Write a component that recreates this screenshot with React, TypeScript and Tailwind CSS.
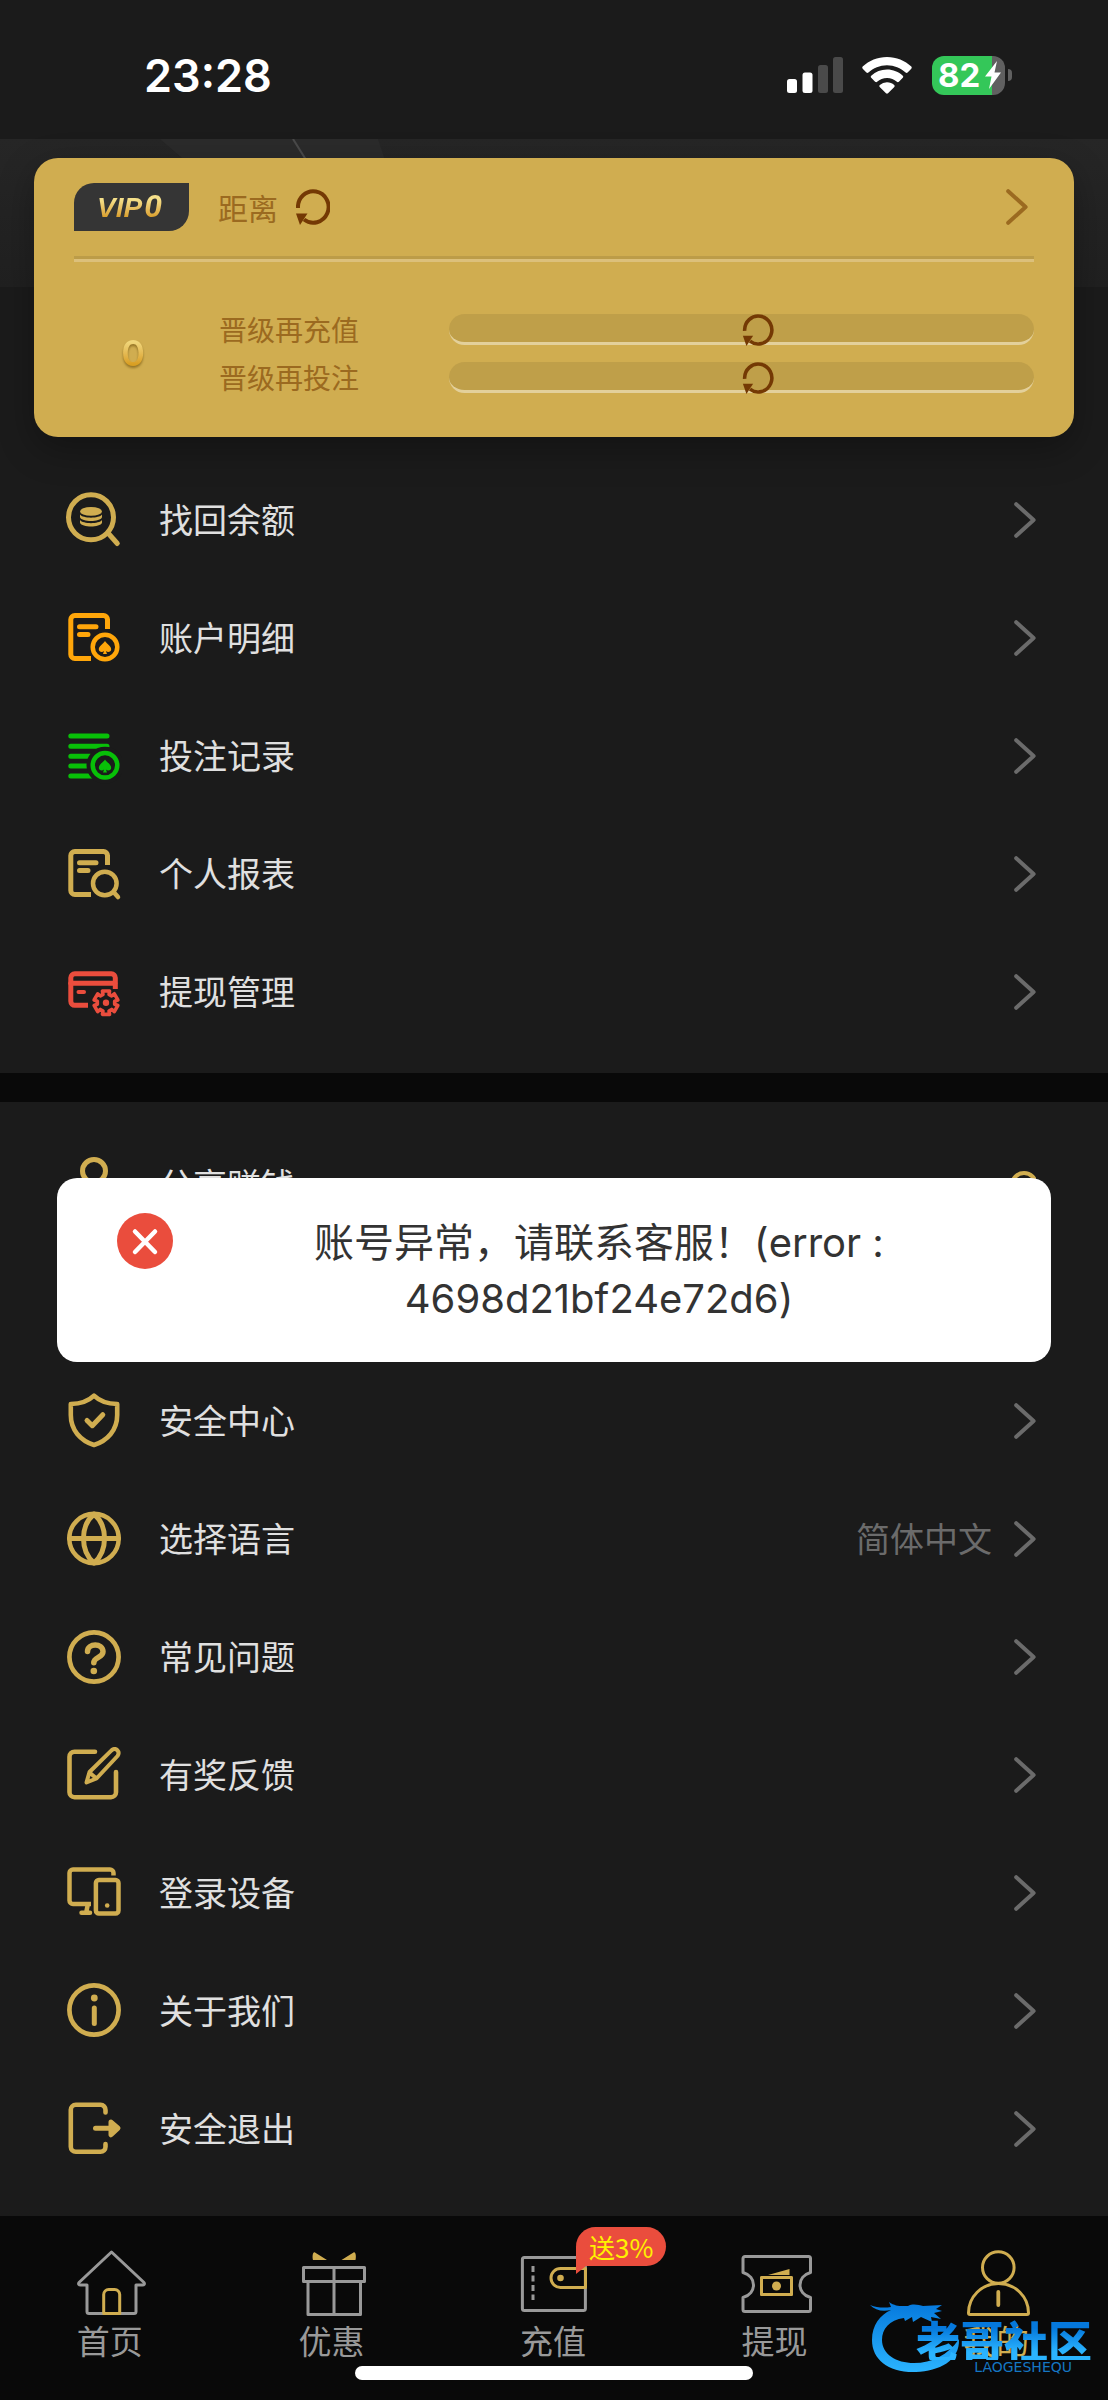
import React from "react";
import type { ReactNode } from "react";

const GOLD = "#d0ad50";

type IconProps = { color?: string; children: ReactNode };

function MenuIcon({ color = GOLD, children }: IconProps) {
  return (
    <svg
      viewBox="0 0 56 56"
      className="size-14 shrink-0"
      fill="none"
      stroke={color}
      strokeWidth="5"
      strokeLinecap="round"
      strokeLinejoin="round"
      aria-hidden="true"
    >
      {children}
    </svg>
  );
}

function Spade({ x, y, color }: { x: number; y: number; color: string }) {
  return (
    <path
      transform={`translate(${x} ${y})`}
      d="M0-6.6C1.6-4 6.2-1.6 6.2 1.7 6.2 4.6 2.6 5.4.9 3.4L2 6.6H-2L-.9 3.4C-2.6 5.4-6.2 4.6-6.2 1.7-6.2-1.6-1.6-4 0-6.6Z"
      fill={color}
      stroke="none"
    />
  );
}

function gearPath(cx: number, cy: number) {
  const points: string[] = [];
  for (let tooth = 0; tooth < 6; tooth++) {
    const base = -90 + tooth * 60;
    const steps: [number, number][] = [
      [-20, 8.8],
      [-17, 12.2],
      [17, 12.2],
      [20, 8.8],
    ];
    for (const [offset, radius] of steps) {
      const a = ((base + offset) * Math.PI) / 180;
      points.push(`${(cx + radius * Math.cos(a)).toFixed(2)} ${(cy + radius * Math.sin(a)).toFixed(2)}`);
    }
  }
  return `M${points.join("L")}Z`;
}

const DocOutline = () => (
  <>
    <path d="M41.500 19V9.500a4 4 0 0 0-4-4H8.800a4 4 0 0 0-4 4v35a4 4 0 0 0 4 4H25" strokeLinecap="butt" />
    <path d="M13.500 16.700H30M13.500 24.500H22" />
  </>
);

const icons = {
  balance: (
    <MenuIcon>
      <circle cx="25" cy="25.300" r="22.500" />
      <path d="M42 41l9.300 10.500" />
      <g fill={GOLD} stroke="none">
        <ellipse cx="25" cy="19.400" rx="11" ry="4.400" />
        <path d="M14 22.500c3 4.200 19 4.200 22 0v2.800c-2 5-20 5-22 0zM14 28c3 4.200 19 4.200 22 0v2.800c-2 5-20 5-22 0z" />
      </g>
    </MenuIcon>
  ),
  account: (
    <MenuIcon color="#ffa60a">
      <DocOutline />
      <circle cx="39" cy="37" r="12.300" strokeWidth="4.500" />
      <Spade x={39} y={37.500} color="#ffa60a" />
    </MenuIcon>
  ),
  bets: (
    <MenuIcon color="#08c008">
      <path d="M4.800 8H41M4.800 18.200H41M4.800 28.200H24M4.800 38H22M4.800 48H26" />
      <circle cx="39" cy="37.300" r="15.500" stroke="#1b1b1b" strokeWidth="6" fill="#1b1b1b" />
      <circle cx="39" cy="37.300" r="12.300" strokeWidth="4.500" />
      <Spade x={39} y={38} color="#08c008" />
    </MenuIcon>
  ),
  report: (
    <MenuIcon>
      <DocOutline />
      <circle cx="38.800" cy="37.500" r="11.800" strokeWidth="4.500" />
      <path d="M48 46.500l4 4.500" strokeWidth="4.500" />
    </MenuIcon>
  ),
  withdraw: (
    <MenuIcon color="#ea4d3d">
      <path d="M22 41.300H8.800a4 4 0 0 1-4-4V13.800a4 4 0 0 1 4-4h36.500a4 4 0 0 1 4 4V25" strokeLinecap="butt" />
      <path d="M4.800 19.300h44" />
      <path d="M12.500 28h5.500" strokeWidth="4" />
      <path d={gearPath(40, 38.700)} strokeWidth="3.600" />
      <circle cx="40" cy="38.700" r="3.200" fill="#ea4d3d" stroke="none" />
    </MenuIcon>
  ),
  share: (
    <MenuIcon>
      <circle cx="28" cy="14" r="11.500" />
      <path d="M6 52c1-28 43-28 44 0z" />
    </MenuIcon>
  ),
  card: (
    <MenuIcon>
      <rect x="4" y="10" width="48" height="36" rx="4" />
      <path d="M4 22h48" />
    </MenuIcon>
  ),
  security: (
    <MenuIcon>
      <path d="M28 2.600C23 7.500 15 10.800 4.800 11v11c0 15 9.500 25.500 23.200 30 13.700-4.500 23.200-15 23.200-30V11C41 10.800 33 7.500 28 2.600Z" strokeWidth="4.600" />
      <path d="M21 27.500l5.300 5.200 10.500-11" />
    </MenuIcon>
  ),
  language: (
    <MenuIcon>
      <circle cx="28" cy="27.500" r="24.700" strokeWidth="4.500" />
      <path d="M3.500 27.500h49" />
      <path d="M28 3C14 15 14 40 28 52 42 40 42 15 28 3Z" />
    </MenuIcon>
  ),
  faq: (
    <MenuIcon>
      <circle cx="28" cy="28" r="24.600" strokeWidth="4.700" />
      <path d="M21.500 22.500c0-8.500 15.500-9 15.500.3 0 6-9.200 5.200-9.200 11" strokeWidth="5.500" />
      <circle cx="27.800" cy="42" r="3.300" fill={GOLD} stroke="none" />
    </MenuIcon>
  ),
  feedback: (
    <MenuIcon>
      <path d="M29 4.700H8.500a5 5 0 0 0-5 5v35.500a5 5 0 0 0 5 5h36.500a5 5 0 0 0 5-5V25" strokeWidth="4.600" />
      <path d="M20.500 35.500l3-10.500L45.500 3.300c4.500-3.500 9 1.500 6 5.700L30.500 31.500zM24 26l6 5" strokeWidth="4" />
    </MenuIcon>
  ),
  devices: (
    <MenuIcon>
      <path d="M47.500 10.500V8a3.500 3.500 0 0 0-3.500-3.500H7A3.500 3.500 0 0 0 3.500 8v27.500A3.500 3.500 0 0 0 7 39h18" strokeWidth="4.500" strokeLinecap="butt" />
      <path d="M15.500 47.800H24M21.500 41l-1 5" strokeWidth="4.500" />
      <rect x="29.900" y="15" width="22.600" height="33.500" rx="3" strokeWidth="4.500" />
      <circle cx="41.200" cy="40.500" r="2.300" fill={GOLD} stroke="none" />
    </MenuIcon>
  ),
  about: (
    <MenuIcon>
      <circle cx="28" cy="27" r="24.600" strokeWidth="4.700" />
      <circle cx="28.300" cy="15" r="3.400" fill={GOLD} stroke="none" />
      <path d="M28.300 25v15.500" />
    </MenuIcon>
  ),
  logout: (
    <MenuIcon>
      <path d="M39.500 11.500V9a5 5 0 0 0-5-5.200H9.800a5 5 0 0 0-5 5v37a5 5 0 0 0 5 5h24.700a5 5 0 0 0 5-5V43" strokeWidth="4.600" />
      <path d="M29.500 27.200H44" />
      <path d="M45 21l7 6.200-7 6.600z" fill={GOLD} />
    </MenuIcon>
  ),
};

function Chevron({ color }: { color: string }) {
  return (
    <svg viewBox="0 0 22 36" className="h-9 w-[22px] shrink-0" fill="none" stroke={color} strokeWidth="4" strokeLinecap="round" strokeLinejoin="round" aria-hidden="true">
      <path d="M2.200 2.200 19.600 18 2.200 33.800" />
    </svg>
  );
}

function Refresh({ className }: { className: string }) {
  return (
    <svg viewBox="0 0 34 36" className={className} aria-hidden="true">
      <path d="M2 19A15.300 15.700 0 1 1 8 30.500" fill="none" stroke="#743904" strokeWidth="4" />
      <path d="M0 24.500H11.500L4 36Z" fill="#743904" />
    </svg>
  );
}

type Item = { icon: ReactNode; label: string; value?: string; badge?: boolean };

const accountItems: Item[] = [
  { icon: icons.balance, label: "找回余额" },
  { icon: icons.account, label: "账户明细" },
  { icon: icons.bets, label: "投注记录" },
  { icon: icons.report, label: "个人报表" },
  { icon: icons.withdraw, label: "提现管理" },
];

const serviceItems: Item[] = [
  { icon: icons.share, label: "分享赚钱", badge: true },
  { icon: icons.card, label: "个人资料" },
  { icon: icons.security, label: "安全中心" },
  { icon: icons.language, label: "选择语言", value: "简体中文" },
  { icon: icons.faq, label: "常见问题" },
  { icon: icons.feedback, label: "有奖反馈" },
  { icon: icons.devices, label: "登录设备" },
  { icon: icons.about, label: "关于我们" },
  { icon: icons.logout, label: "安全退出" },
];

function MenuRow({ item }: { item: Item }) {
  return (
    <li>
      <a href="#" className="flex items-center py-[31px] pr-[72px] pl-[66px] text-[34px] leading-[52px] text-[#e0e0e0]">
        {item.icon}
        <span className="ml-[37px] flex-1 pb-[3px]">{item.label}</span>
        {item.value && <span className="mr-[22px] pb-[3px] text-[#6b6b6b]">{item.value}</span>}
        {item.badge ? (
          <svg viewBox="0 0 28 28" className="size-7" fill="none" stroke={GOLD} strokeWidth="4" aria-hidden="true">
            <circle cx="16" cy="14" r="12" />
          </svg>
        ) : (
          <Chevron color="#6b6b6b" />
        )}
      </a>
    </li>
  );
}

function StatusBar() {
  return (
    <header className="flex h-[139px] items-center justify-between pt-[11px] pr-[96px] pl-[144px] text-white">
      <time className="font-[Inter] text-[45px] leading-none font-semibold">23:28</time>
      <div className="flex items-center">
        <svg viewBox="0 0 56 36" className="h-9 w-14" aria-label="signal">
          <rect x="0" y="22" width="10" height="14" rx="2.500" fill="#fff" />
          <rect x="15.500" y="15.500" width="10" height="20.500" rx="2.500" fill="#fff" />
          <rect x="31" y="8" width="10" height="28" rx="2.500" fill="#4a4a4a" />
          <rect x="46" y="0" width="10" height="36" rx="2.500" fill="#4a4a4a" />
        </svg>
        <svg viewBox="0 0 50 37" className="ml-[19px] h-[37px] w-[50px]" fill="#fff" aria-label="wifi">
          <path d="M25 0c9.500 0 18 3.600 24.300 9.600.6.600.6 1.500 0 2.100l-3.700 3.800c-.6.600-1.400.6-2 .1C38.700 11 32.200 8.200 25 8.200S11.300 11 6.400 15.600c-.6.500-1.400.5-2-.1L.7 11.700c-.6-.600-.6-1.500 0-2.100C7 3.600 15.500 0 25 0Z" />
          <path d="M25 12.600c6.100 0 11.600 2.300 15.800 6.100.6.600.6 1.500 0 2.100l-3.900 3.900c-.6.600-1.400.6-2 .1A14.500 14.500 0 0 0 25 21c-3.800 0-7.200 1.400-9.900 3.800-.6.500-1.400.5-2-.1l-3.900-3.900c-.6-.6-.6-1.500 0-2.100a23.500 23.500 0 0 1 15.800-6.100Z" />
          <path d="M25 25.200c2.800 0 5.300 1 7.200 2.700.6.600.6 1.400.1 2L26 36.300c-.6.600-1.400.6-2 0l-6.300-6.400c-.5-.600-.5-1.400.1-2a10.800 10.800 0 0 1 7.200-2.700Z" />
        </svg>
        <div className="relative ml-5 flex h-[39px] w-[73px] items-center overflow-hidden rounded-xl bg-[linear-gradient(90deg,#34c759_82%,#606060_82%)] pl-[6px]">
          <span className="font-[Inter] text-[33px] leading-none font-bold">82</span>
          <svg viewBox="0 0 16 28" className="absolute right-1 h-7 w-4" fill="#fff" aria-hidden="true">
            <path d="M12 0 0 15.500h6.500L4 28 16 11.500H9.500Z" />
          </svg>
        </div>
        <div className="ml-[3px] h-3 w-1 rounded-r-full bg-[#606060]" />
      </div>
    </header>
  );
}

function Progress({ label }: { label: string }) {
  return (
    <div className="flex items-center">
      <span className="w-[230px] shrink-0 text-[28px] leading-8 text-[#9b6a20]">{label}</span>
      <div role="progressbar" aria-label={label} className="flex h-[31px] flex-1 items-end justify-center rounded-full border-b-3 border-[#e3d09b] bg-[#bf9f49] pl-8">
        <Refresh className="-mb-1 h-8 w-8 shrink-0" />
      </div>
    </div>
  );
}

function VipCard() {
  return (
    <section className="relative mx-[34px] -mt-[129px] rounded-3xl bg-[#d0ad50] px-10 pt-[25px] pb-11 shadow-[0_12px_36px_rgba(0,0,0,0.3)]">
      <a href="#" className="flex h-12 items-center">
        <span className="flex h-12 w-[115px] items-center justify-center rounded-tl-[20px] rounded-br-[20px] bg-[#353535]">
          <span className="bg-linear-to-b from-[#f5e08a] from-30% to-[#d79a1e] to-80% bg-clip-text pr-1 font-['Liberation_Sans'] text-[28px] leading-9 font-bold text-transparent italic">
            VIP<span className="pl-[2px] font-[Roboto] text-[32px]">0</span>
          </span>
        </span>
        <span className="ml-[29px] text-[30px] leading-9 text-[#9b6a20]">距离</span>
        <Refresh className="ml-[18px] h-9 w-[34px]" />
        <span className="flex-1" />
        <span className="pr-[6px]">
          <Chevron color="#9b6a20" />
        </span>
      </a>
      <div className="mt-[25px] h-[6px] border-t-3 border-b-3 border-t-[#bc9c48] border-b-[#dcc07b]" />
      <div className="mt-[51px] flex items-center">
        <span className="w-[145px] pr-[27px] text-center">
          <span className="bg-linear-to-b from-[#f0d67a] from-25% to-[#d99f22] to-75% bg-clip-text font-[Inter] text-[36px] leading-10 font-semibold text-transparent drop-shadow-[0_2px_1px_rgba(110,80,10,0.6)]">0</span>
        </span>
        <div className="flex flex-1 flex-col gap-4">
          <Progress label="晋级再充值" />
          <Progress label="晋级再投注" />
        </div>
      </div>
    </section>
  );
}

function Toast() {
  return (
    <div role="alert" className="absolute inset-x-[57px] top-[76px] flex items-start rounded-[20px] bg-white px-[60px] pt-[35px] pb-[35px]">
      <svg viewBox="0 0 56 56" className="size-14 shrink-0" aria-hidden="true">
        <circle cx="28" cy="28" r="28" fill="#ea4d3d" />
        <path d="M18 18.500 38 39M38 18.500 18 39" stroke="#fff" strokeWidth="4.500" strokeLinecap="round" />
      </svg>
      <p className="mr-[-34px] flex-1 px-16 pt-[2px] text-center font-[Inter,'Noto_Sans_CJK_SC',sans-serif] text-[40px] leading-14 text-[#333]">
        账号异常，请联系客服！(error :<br />4698d21bf24e72d6)
      </p>
    </div>
  );
}

function NavSvg({ children }: { children: ReactNode }) {
  return (
    <svg viewBox="0 0 72 68" className="h-[68px] w-[72px]" fill="none" stroke="#999" strokeWidth="3" strokeLinejoin="round" aria-hidden="true">
      {children}
    </svg>
  );
}

const tabs: { label: string; icon: ReactNode; active?: boolean; badge?: string }[] = [
  {
    label: "首页",
    icon: (
      <NavSvg>
        <path d="M36.500 4 4 34.500c-1 1.500 0 2.500 1.500 2.500H12v26.500a2 2 0 0 0 2 2h45a2 2 0 0 0 2-2V37h6.500c1.500 0 2.500-1 1.500-2.500Z" />
        <path d="M28.700 65.500V46.500a5 5 0 0 1 5-5h6a5 5 0 0 1 5 5v19Z" stroke={GOLD} />
      </NavSvg>
    ),
  },
  {
    label: "优惠",
    icon: (
      <NavSvg>
        <path d="M7.500 19.500h61v14h-61zM12 33.500h52.500v33H12zM38 19.500v47" />
        <path d="M17 12c-1-4 0-9 2-7.500l12 7.500ZM59.500 12c1-4 0-9-2-7.500L45.500 12Z" fill={GOLD} stroke="none" />
      </NavSvg>
    ),
  },
  {
    label: "充值",
    badge: "送3%",
    icon: (
      <NavSvg>
        <rect x="4.400" y="9.500" width="63" height="53" rx="2" />
        <path d="M15 18v34" strokeDasharray="6 3.500" />
        <path d="M67.500 20.500h-25a9.500 9.500 0 0 0 0 19h25Z" stroke={GOLD} />
        <circle cx="42.500" cy="30" r="3.300" fill={GOLD} stroke="none" />
      </NavSvg>
    ),
  },
  {
    label: "提现",
    icon: (
      <NavSvg>
        <path d="M3 10.500a2 2 0 0 1 2-2h63.500a2 2 0 0 1 2 2V24.500c-14 4-14 21 0 25v12a2 2 0 0 1-2 2H5a2 2 0 0 1-2-2v-12c14-4 14-21 0-25Z" />
        <rect x="21.500" y="29.500" width="30" height="17" stroke={GOLD} />
        <path d="M20.500 28.500h5l-5 5zM52.500 28.500h-5l5 5zM20.500 47.500h5l-5-5zM52.500 47.500h-5l5-5zM28 27 49.500 21v6Z" fill={GOLD} stroke="none" />
        <circle cx="36.500" cy="38" r="4.500" fill={GOLD} stroke="none" />
      </NavSvg>
    ),
  },
  {
    label: "我的",
    active: true,
    icon: (
      <NavSvg>
        <g stroke={GOLD}>
          <circle cx="37.300" cy="19.500" r="15.800" />
          <path d="M7.500 65c0-16 13-29.500 30-29.500S67.500 49 67.500 65a1.500 1.500 0 0 1-1.500 1.500H9A1.500 1.500 0 0 1 7.500 65Z" />
          <path d="M37.300 44v13" strokeWidth="3.800" strokeLinecap="round" />
        </g>
      </NavSvg>
    ),
  },
];

function TabBar() {
  return (
    <nav className="relative bg-[#090909] pt-8 pb-5">
      <ul className="flex">
        {tabs.map((tab) => (
          <li key={tab.label} className="flex-1">
            <a href="#" className="relative flex flex-col items-center">
              {tab.icon}
              <span className={tab.active ? "mt-[2px] mb-[2px] pr-[2px] text-[33px] leading-11 text-[#d0ad50]" : "mt-[2px] mb-[2px] pr-[2px] text-[33px] leading-11 text-[#999]"}>{tab.label}</span>
              {tab.badge && (
                <span className="absolute -top-[21px] left-1/2 ml-[22px] rounded-[20px] rounded-bl-none bg-[#ea4d3d] px-[13px] text-[26px] leading-[39px] whitespace-nowrap text-[#fff200]">
                  {tab.badge}
                  <svg viewBox="0 0 10 8" className="absolute top-full left-0 h-2 w-[10px]" fill="#ea4d3d" aria-hidden="true">
                    <path d="M0 0h10L0 8Z" />
                  </svg>
                </span>
              )}
            </a>
          </li>
        ))}
      </ul>
      <div className="mx-auto mt-[2px] h-[14px] w-[36%] rounded-full bg-white" />
      <CommunityMark />
    </nav>
  );
}

function CommunityMark() {
  return (
    <div className="pointer-events-none absolute right-4 bottom-[26px] flex h-[76px] w-[223px] flex-col items-end justify-end">
      <svg viewBox="0 0 223 76" className="absolute inset-0 h-full w-full" aria-hidden="true">
        <defs>
          <linearGradient id="swirl" x1="0" y1="0" x2="0" y2="1">
            <stop offset="0" stopColor="#0578dc" />
            <stop offset="1" stopColor="#2bb4ff" />
          </linearGradient>
        </defs>
        <path
          fill="url(#swirl)"
          d="M1 7c7 3 15 3 21 2l-2-5c7 5 13 4 19 4 5-3 11-1 15 0l19-1-6 4 6 2-8 2 7 6-10-2 1 5-11-5-8 5-1-5-7 4-1-3C20 22 13 31 13 42c0 14 14 23 32 23 18 0 34-8 45-24 1 22-20 32-43 33C20 75 3 62 3 42 3 27 11 17 22 12 13 14 6 12 1 7Z"
        />
      </svg>
      <span className="relative bg-linear-to-b from-[#0578dc] from-20% to-[#2bb4ff] to-80% bg-clip-text text-[44px] leading-10 font-black text-transparent">老哥社区</span>
      <span className="relative mr-5 font-['DejaVu_Sans'] text-[14px] leading-[14px] text-[#1577c4]">LAOGESHEQU</span>
    </div>
  );
}

export default function App() {
  return (
    <div className="min-h-screen bg-[#1b1b1b] font-['Noto_Sans_CJK_SC',sans-serif]">
      <StatusBar />
      <div className="h-[148px] overflow-hidden bg-linear-to-b from-[#262626] to-[#202020]">
        <svg viewBox="0 0 400 60" className="h-[60px] w-[400px]" aria-hidden="true">
          <path d="M160 0h218l20 60H230Z" fill="#2b2b2b" />
          <path d="M293 0l30 48" stroke="#4a4a4a" strokeWidth="2" />
        </svg>
      </div>
      <VipCard />
      <ul className="pt-6 pb-[22px]">
        {accountItems.map((item) => (
          <MenuRow key={item.label} item={item} />
        ))}
      </ul>
      <div className="h-[29px] bg-[#090909]" />
      <div className="relative pt-6 pb-7">
        <ul>
          {serviceItems.map((item) => (
            <MenuRow key={item.label} item={item} />
          ))}
        </ul>
        <Toast />
      </div>
      <TabBar />
    </div>
  );
}
